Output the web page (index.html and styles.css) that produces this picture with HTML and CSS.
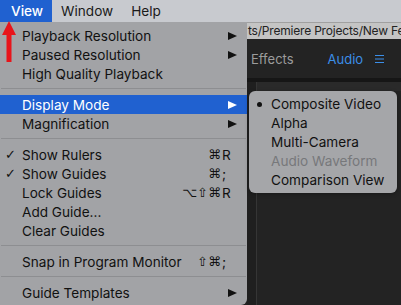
FILE: index.html
```html
<!DOCTYPE html>
<html lang="en">
<head>
    <meta charset="UTF-8">
    <meta name="viewport" content="width=device-width, initial-scale=1.0">
    <title>View Menu</title>
    <link rel="stylesheet" href="styles.css">
</head>
<body>
    <div class="menubar">
        <div class="menubar-item active">View</div>
        <div class="menubar-item">Window</div>
        <div class="menubar-item">Help</div>
    </div>
    <div class="workspace">
        <div class="menu">
            <div class="menu-row"><span class="label">Playback Resolution</span><span class="arrow"></span></div>
            <div class="menu-row"><span class="label">Paused Resolution</span><span class="arrow"></span></div>
            <div class="menu-row"><span class="label">High Quality Playback</span></div>
            <div class="menu-sep"></div>
            <div class="menu-row selected"><span class="label">Display Mode</span><span class="arrow"></span></div>
            <div class="menu-row"><span class="label">Magnification</span><span class="arrow"></span></div>
            <div class="menu-sep"></div>
            <div class="menu-row"><span class="check">✓</span><span class="label">Show Rulers</span><span class="keys"><span class="mods">⌘</span><span class="key">R</span></span></div>
            <div class="menu-row"><span class="check">✓</span><span class="label">Show Guides</span><span class="keys"><span class="mods">⌘</span><span class="key">;</span></span></div>
            <div class="menu-row"><span class="label">Lock Guides</span><span class="keys"><span class="mods">⌥⇧⌘</span><span class="key">R</span></span></div>
            <div class="menu-row"><span class="label">Add Guide...</span></div>
            <div class="menu-row"><span class="label">Clear Guides</span></div>
            <div class="menu-sep"></div>
            <div class="menu-row"><span class="label">Snap in Program Monitor</span><span class="keys"><span class="mods">⇧⌘</span><span class="key">;</span></span></div>
            <div class="menu-sep"></div>
            <div class="menu-row"><span class="label">Guide Templates</span><span class="arrow"></span></div>
        </div>
        <div class="app">
            <div class="titlebar">ts/Premiere Projects/New Fea</div>
            <div class="tabs">
                <span class="tab">Effects</span>
                <span class="tab blue">Audio</span>
                <svg class="hamburger" width="9" height="8" viewBox="0 0 9 8">
                    <path d="M0 0.5H9M0 4H9M0 7.5H9" stroke="#3b8ee8" stroke-width="1.2"/>
                </svg>
                <span class="tab-dot"></span>
            </div>
            <div class="tab-strip"></div>
            <div class="panel">
                <div class="panel-gutter"></div>
                <div class="panel-body"></div>
            </div>
        </div>
    </div>

    <div class="submenu">
        <div class="menu-row"><span class="bullet"></span><span class="label">Composite Video</span></div>
        <div class="menu-row"><span class="label">Alpha</span></div>
        <div class="menu-row"><span class="label">Multi-Camera</span></div>
        <div class="menu-row disabled"><span class="label">Audio Waveform</span></div>
        <div class="menu-row"><span class="label">Comparison View</span></div>
    </div>

    <svg class="red-arrow" width="16" height="42" viewBox="0 0 16 42">
        <path d="M8 0L15 14H10.5V41H5.5V14H1Z" fill="#e8141a"/>
    </svg>
</body>
</html>
```

FILE: styles.css
```css
body {
    margin: 0;
    width: 401px;
    height: 305px;
    overflow: hidden;
    position: relative;
    background-color: #222222;
    font-family: Inter, "Noto Sans", sans-serif;
    font-size: 13.6px;
    color: #111111;
}

.menubar {
    display: flex;
    height: 22px;
    background-color: #c8cacf;
}
.menubar-item {
    padding: 0 9px;
    line-height: 22px;
    color: #1a1a1a;
}
.menubar-item.active {
    padding: 0 9px 0 11px;
    background-color: #2061d0;
    color: #ffffff;
    font-weight: 500;
}

.workspace {
    display: flex;
    height: 283px;
}

.menu {
    width: 247px;
    flex-shrink: 0;
    padding: 4px 0;
    background-color: #a2a3a6;
    border-bottom-right-radius: 6px;
    box-sizing: border-box;
}
.menu-row {
    display: flex;
    align-items: center;
    height: 19px;
    padding: 0 10px 0 22px;
    position: relative;
    white-space: nowrap;
}
.menu-row .label {
    flex: 1;
}
.menu-row.selected {
    background-color: #2061d0;
    color: #ffffff;
}
.menu-row.disabled {
    color: #77787b;
}
.menu-sep {
    height: 1px;
    margin: 5px 1px 6px;
    background-color: #8d8e91;
}

.arrow {
    width: 0;
    height: 0;
    border-top: 4.5px solid transparent;
    border-bottom: 4.5px solid transparent;
    border-left: 9px solid #111111;
}
.selected .arrow {
    border-left-color: #ffffff;
}

.check {
    position: absolute;
    left: 5px;
    top: 0;
    line-height: 19px;
    font-family: "DejaVu Sans", sans-serif;
    font-size: 13px;
    font-weight: bold;
}

.keys {
    display: flex;
    font-family: "DejaVu Sans", Inter, sans-serif;
    font-size: 13px;
}
.mods {
    text-align: right;
}
.key {
    width: 15px;
    padding-left: 1px;
    font-family: Inter, sans-serif;
    font-size: 13.6px;
}

.app {
    flex: 1;
    display: flex;
    flex-direction: column;
    min-width: 0;
}
.titlebar {
    height: 16px;
    line-height: 16px;
    background-color: #c4c4c4;
    border-top: 1px solid #a0a0a0;
    color: #222222;
    font-size: 12px;
    letter-spacing: -0.2px;
    white-space: nowrap;
    overflow: hidden;
    padding-left: 1px;
}
.tabs {
    height: 39px;
    display: flex;
    align-items: center;
    background-color: #232323;
    font-size: 13px;
    white-space: nowrap;
    overflow: hidden;
}
.tab {
    color: #9c9c9c;
    margin-left: 4px;
}
.tab.blue {
    color: #3b8ee8;
    margin-left: 34px;
}
.hamburger {
    margin-left: 12px;
    flex-shrink: 0;
}
.tab-dot {
    width: 8px;
    height: 8px;
    border-radius: 50%;
    border: 1px solid #8a8a8a;
    margin-left: 22px;
    flex-shrink: 0;
}
.tab-strip {
    height: 4px;
    background-color: #161616;
}
.panel {
    flex: 1;
    display: flex;
    background-color: #2a2a2a;
}
.panel-gutter {
    width: 9px;
    background-color: #1f1f1f;
    border-right: 1px solid #353535;
}
.panel-body {
    flex: 1;
    margin-top: 9px;
    background-color: #232323;
}

.submenu {
    position: absolute;
    left: 249px;
    top: 91px;
    width: 148px;
    padding: 3.5px 0;
    background-color: #a5a6a9;
    border-radius: 6px;
    box-shadow: 0 1px 4px rgba(0, 0, 0, 0.3);
}
.submenu .menu-row {
    padding-right: 4px;
}
.bullet {
    position: absolute;
    left: 8px;
    top: 7px;
    width: 5px;
    height: 5px;
    border-radius: 50%;
    background-color: #111111;
}

.red-arrow {
    position: absolute;
    left: 1px;
    top: 21px;
}
```
